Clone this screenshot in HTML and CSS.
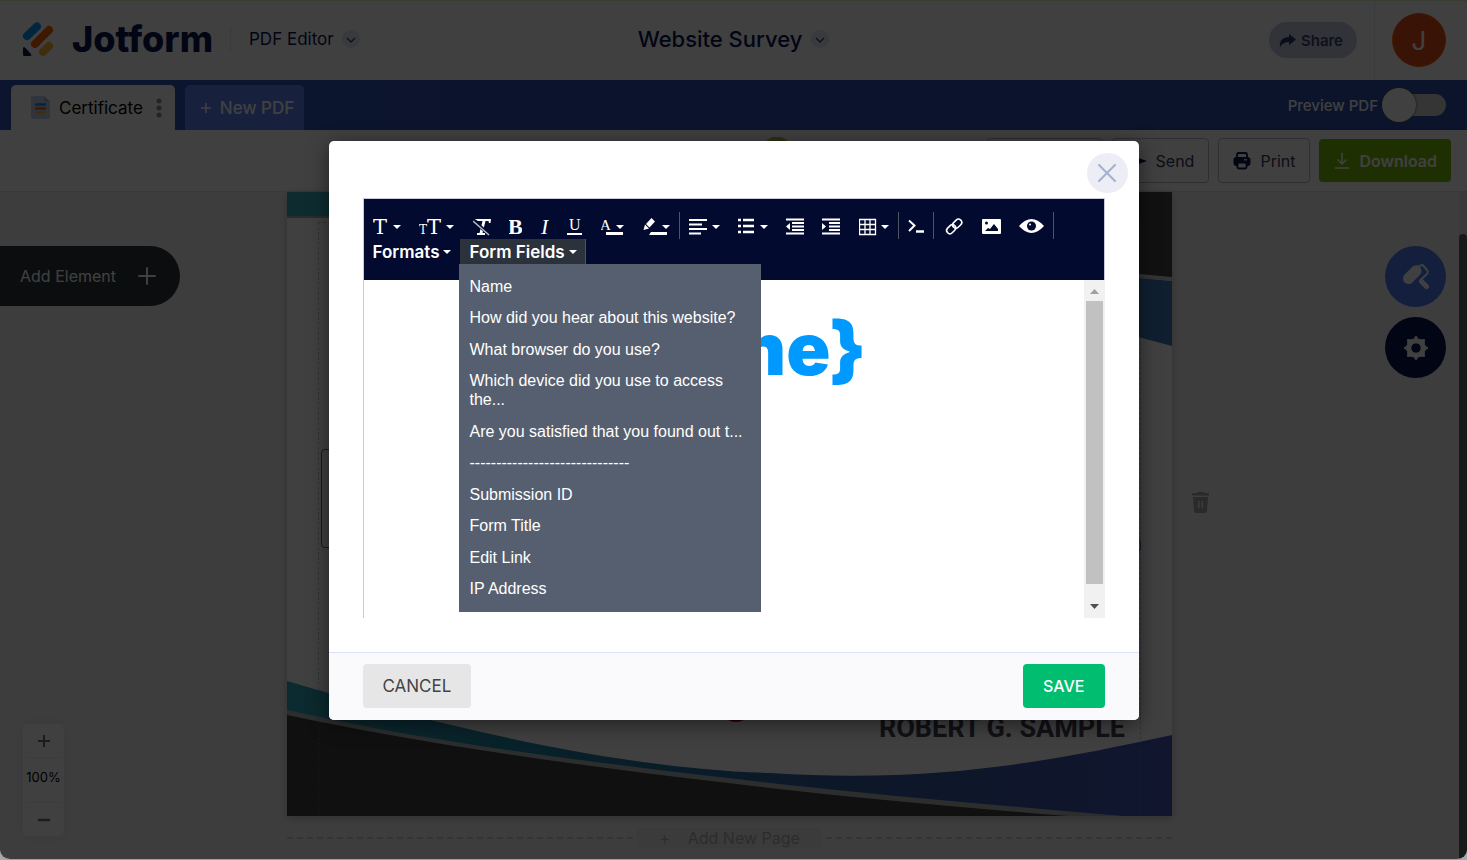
FILE: index.html
```html
<!DOCTYPE html>
<html lang="en">
<head>
  <meta charset="UTF-8" />
  <meta name="viewport" content="width=device-width, initial-scale=1.0"/>
  <title>Website Survey - PDF Editor</title>
  <link rel="stylesheet" href="styles.css">
</head>
<body>
<div class="app">
  <header class="header">
    <div class="header-left">
      <a href="#" class="logo">
        <svg width="32" height="36" viewBox="0 0 32 36">
          <g stroke-width="8" stroke-linecap="round">
            <path d="M5 15 L15 5.500" stroke="#0099ff"/>
            <path d="M13 23 L27 9" stroke="#ff6100"/>
            <path d="M21 31 L27 25" stroke="#ffb629"/>
          </g>
          <path d="M1 27.500 Q1 25 3 26.500 L9 33 Q10 35 8 35 H2.500 Q1 35 1 33.500 Z" fill="#0a1551"/>
        </svg>
        <span>Jotform</span>
      </a>
      <button class="product">PDF Editor
        <svg class="chev" width="18" height="18" viewBox="0 0 18 18"><circle cx="9" cy="9" r="9" fill="#e3e5f5"/><path d="M5 8 L9 12 L13 8" fill="none" stroke="#343c6a" stroke-width="1.300"/></svg>
      </button>
    </div>
    <button class="title">Website Survey
      <svg class="chev" width="18" height="18" viewBox="0 0 18 18"><circle cx="9" cy="9" r="9" fill="#e3e5f5"/><path d="M5 8 L9 12 L13 8" fill="none" stroke="#343c6a" stroke-width="1.300"/></svg>
    </button>
    <div class="header-right">
      <button class="share">
        <svg width="17" height="15" viewBox="0 0 17 15"><path d="M10 1 L17 6.500 L10 12 V9 C6 9 3 10.500 1 14 C0 8 4 4 10 4 Z" fill="#2c3460"/></svg>
        Share
      </button>
      <div class="account"><button class="avatar">J</button></div>
    </div>
  </header>

  <nav class="tabs">
    <button class="tab active">
      <svg width="19" height="23" viewBox="0 0 19 23"><path d="M2 0 H13 L19 6 V21 Q19 23 17 23 H2 Q0 23 0 21 V2 Q0 0 2 0 Z" fill="#c8ceed"/><path d="M13 0 L19 6 H15 Q13 6 13 4 Z" fill="#a5aed8"/><path d="M5 8.500 H14" stroke="#0099ff" stroke-width="2.500" stroke-linecap="round"/><path d="M5 12.500 H14" stroke="#ff6100" stroke-width="2.500" stroke-linecap="round"/><path d="M5 16.500 H14" stroke="#ffb629" stroke-width="2.500" stroke-linecap="round"/></svg>
      Certificate
      <svg class="dots" width="6" height="20" viewBox="0 0 6 20" fill="#8d8fa8"><circle cx="3" cy="3" r="2.500"/><circle cx="3" cy="10" r="2.500"/><circle cx="3" cy="17" r="2.500"/></svg>
    </button>
    <button class="tab new"><svg width="10" height="10" viewBox="0 0 10 10"><path d="M5 0 V10 M0 5 H10" stroke="#fff" stroke-width="1.500"/></svg>New PDF</button>
    <label class="preview">Preview PDF <input type="checkbox" /></label>
  </nav>

  <div class="actions">
    <span class="status"></span>
    <div class="action-buttons">
      <button class="action history" aria-label="History"></button>
      <button class="action">
        <svg width="20" height="16" viewBox="0 0 20 16"><path d="M0 1 L20 8 L0 15 L3 8 Z" fill="#0a1551"/></svg>
        Send
      </button>
      <button class="action">
        <svg width="18" height="18" viewBox="0 0 18 18"><path d="M4 5 V2.500 Q4 1 5.500 1 H12.500 Q14 1 14 2.500 V5" fill="none" stroke="#0a1551" stroke-width="1.800"/><rect x="0.500" y="5" width="17" height="9" rx="3" fill="#0a1551"/><rect x="4.500" y="10.500" width="9" height="6" rx="1.500" fill="#fff" stroke="#0a1551" stroke-width="1.800"/><path d="M11 7.800 H14" stroke="#fff" stroke-width="1.300"/></svg>
        Print
      </button>
      <button class="action download">
        <svg width="16" height="16" viewBox="0 0 16 16" fill="none" stroke="#fff" stroke-width="1.500"><path d="M8 0 V11 M3.500 6.500 L8 11 L12.500 6.500 M1 15 H15"/></svg>
        Download
      </button>
    </div>
  </div>

  <main class="workspace">
    <section class="paper">
      <svg class="art" viewBox="0 0 885 624" preserveAspectRatio="none">
        <defs>
          <linearGradient id="wave" x1="0" x2="1"><stop offset="0" stop-color="#30a8bc"/><stop offset="0.300" stop-color="#2080a4"/><stop offset="0.650" stop-color="#345ca0"/><stop offset="1" stop-color="#4458b8"/></linearGradient>
          <linearGradient id="corner" x1="0" x2="1"><stop offset="0" stop-color="#38b8cc"/><stop offset="1" stop-color="#4078c0"/></linearGradient>
        </defs>
        <rect width="400" height="24" fill="#38aebf"/>
        <rect width="400" height="2" y="24" fill="#a8b0b0"/>
        <path d="M400 0 H885 V86 Q640 70 400 0 Z" fill="#444"/>
        <path d="M400 10 Q640 68 885 89 V154 Q640 90 400 12 Z" fill="url(#corner)"/>
        <path d="M820 81 L885 87" stroke="#ccc" stroke-width="4"/>
        <path d="M0 489 C150 533 330 577 483 581 C650 592 770 568 885 543 V624 H0 Z" fill="url(#wave)"/>
        <path d="M0 518 C160 554 320 572 483 591 C600 604 720 614 836 624 H0 Z" fill="#b0b8b8"/>
        <path d="M0 523 C160 557 320 577 483 596 C580 607 680 616 781 624 H0 Z" fill="#404040"/>
        <ellipse cx="449" cy="526" rx="9" ry="4" fill="#a01028"/>
        <path d="M31.500 30 V624 M853.500 30 V624 M31 30.500 H853" stroke="#6080b0" stroke-opacity="0.400" stroke-dasharray="3 2" fill="none"/>
      </svg>
      <div class="selection"><span class="handle"></span></div>
      <p class="signer">ROBERT G. SAMPLE</p>
      <button class="trash" aria-label="Delete element">
        <svg width="17" height="21" viewBox="0 0 17 21"><path d="M0 2 Q0 1 1 1 H5 L6 0 H11 L12 1 H16 Q17 1 17 2 V3.500 H0 Z M1 5 H16 L15 19 Q15 21 13 21 H4 Q2 21 2 19 Z M6 9 V16 H7.500 V9 Z M9.500 9 V16 H11 V9 Z" fill="#a4a6ac" fill-rule="evenodd"/></svg>
      </button>
    </section>
    <div class="add-page">
      <button><span>+</span>Add New Page</button>
    </div>

    <button class="add-element">Add Element
      <svg width="18" height="18" viewBox="0 0 18 18"><path d="M9 1 V17 M1 9 H17" stroke="#fff" stroke-width="2" stroke-linecap="round"/></svg>
    </button>
    <div class="side-tools">
      <button class="designer" aria-label="Designer">
        <svg width="28" height="28" viewBox="0 0 28 28"><path d="M6.500 15.500 L14 8" stroke="#fff" stroke-width="11" stroke-linecap="round"/><path d="M10 4 Q12 2 15 2.500 L18 3 L19 9 L9 20 Q7 22 4 19 Z" fill="#fff"/><path d="M17 3.500 Q19.500 1 21.500 3 L25.500 7.500 Q26.500 9.500 25 11 L18.500 17 V19" fill="none" stroke="#fff" stroke-width="2"/><path d="M19.500 18.500 L24.500 23.500" stroke="#fff" stroke-width="5" stroke-linecap="round"/></svg>
      </button>
      <button class="settings" aria-label="Settings">
        <svg width="26" height="26" viewBox="0 0 26 26"><path fill="#fff" stroke="#fff" stroke-linejoin="round" fill-rule="evenodd" d="M13 1 Q14.500 4.500 16.500 4.500 Q18.500 5 21.500 4.500 Q21 7.500 21.500 9.500 Q22 11.500 25 13 Q22 14.500 21.500 16.500 Q21 18.500 21.500 21.500 Q18.500 21 16.500 21.500 Q14.500 21.500 13 25 Q11.500 21.500 9.500 21.500 Q7.500 21 4.500 21.500 Q5 18.500 4.500 16.500 Q4 14.500 1 13 Q4 11.500 4.500 9.500 Q5 7.500 4.500 4.500 Q7.500 5 9.500 4.500 Q11.500 4.500 13 1 Z M13 7.800 A5.200 5.200 0 1 0 13 18.200 A5.200 5.200 0 1 0 13 7.800 Z"/></svg>
      </button>
    </div>
    <div class="zoom">
      <button aria-label="Zoom in"><svg width="12" height="12" viewBox="0 0 12 12"><path d="M6 0 V12 M0 6 H12" stroke="#707070" stroke-width="2"/></svg></button>
      <span>100%</span>
      <button aria-label="Zoom out"><svg width="12" height="12" viewBox="0 0 12 12"><path d="M0 6 H12" stroke="#707070" stroke-width="2.500"/></svg></button>
    </div>
    <div class="page-scroll"><div></div></div>
  </main>

  <div class="overlay">
    <div class="modal" role="dialog" aria-label="Edit text">
      <button class="close" aria-label="Close"><svg width="18" height="18" viewBox="0 0 18 18"><path d="M1 1 L17 17 M17 1 L1 17" stroke="#a3b0cf" stroke-width="2" stroke-linecap="round"/></svg></button>
      <div class="modal-body">
        <div class="editor">
          <div class="toolbar">
            <div class="tool-row">
              <button aria-label="Font"><svg width="28" height="26" viewBox="0 0 28 26"><text x="0" y="21" class="slab" font-size="21">T</text><path class="caret" d="M20 12 H28 L24 16 Z"/></svg></button>
              <button aria-label="Font size"><svg width="36" height="26" viewBox="0 0 36 26"><text x="0" y="21" class="slab" font-size="12">T</text><text x="8" y="21" class="slab" font-size="21">T</text><path class="caret" d="M27 12 H35 L31 16 Z"/></svg></button>
              <button aria-label="Clear formatting"><svg width="18" height="26" viewBox="0 0 18 26"><path d="M1.500 6 H18 L17.500 10 H16 L15.500 8 H12.500 L9.500 20 H12 V22 H4 V20 H6.500 L9.500 8 H5 Z" fill="#fff"/><path d="M0 7 L17 22.500" stroke="#030a2f" stroke-width="3.500"/><path d="M0 8 L16 22" stroke="#b8bcc8" stroke-width="1.500"/></svg></button>
              <button aria-label="Bold"><svg width="13" height="26" viewBox="0 0 13 26"><text x="-1" y="21" class="serif" font-size="22" font-weight="700">B</text></svg></button>
              <button aria-label="Italic"><svg width="9" height="26" viewBox="0 0 9 26"><text x="1" y="21" class="serif" font-size="22" font-style="italic">I</text></svg></button>
              <button aria-label="Underline"><svg width="16" height="26" viewBox="0 0 16 26"><text x="2" y="17" class="serif" font-size="16">U</text><path d="M0 20 H15 V22 H0 Z" fill="#fff"/></svg></button>
              <button aria-label="Text color"><svg width="24" height="26" viewBox="0 0 24 26"><text x="-1" y="17" class="serif" font-size="15">A</text><path d="M5 19 H22 V22 H5 Z" fill="#fff"/><path class="caret" d="M15 12 H23 L19 16 Z"/></svg></button>
              <button aria-label="Highlight"><svg width="27" height="26" viewBox="0 0 27 26"><path d="M8.500 5 L12 8.500 L6.500 14.500 L3 11 Z M2 11.500 L6 15.500 L0.500 17 Z" fill="#fff"/><path d="M8 19 H24 V22 H6 Z" fill="#fff"/><path class="caret" d="M19 12 H27 L23 16 Z"/></svg></button>
              <span class="sep"></span>
              <button aria-label="Alignment"><svg width="31" height="26" viewBox="0 0 31 26"><path d="M0 7 H18 M0 11.500 H13 M0 16 H18 M0 20.500 H12" stroke="#fff" stroke-width="2"/><path class="caret" d="M23 12 H31 L27 16 Z"/></svg></button>
              <button aria-label="Bullet list"><svg width="30" height="26" viewBox="0 0 30 26"><path d="M0 7 H3 M5 7 H16 M0 13 H3 M5 13 H16 M0 19 H3 M5 19 H16" stroke="#fff" stroke-width="2.500"/><path class="caret" d="M22 12 H30 L26 16 Z"/></svg></button>
              <button aria-label="Outdent"><svg width="18" height="26" viewBox="0 0 18 26"><path d="M0 6.500 H18 M6 10 H18 M6 13.500 H18 M6 17 H18 M0 20.500 H18" stroke="#fff" stroke-width="1.800"/><path d="M4 10 V17 L0 13.500 Z" fill="#fff"/></svg></button>
              <button aria-label="Indent"><svg width="19" height="26" viewBox="0 0 19 26"><path d="M0 6.500 H18 M7 10 H18 M7 13.500 H18 M7 17 H18 M0 20.500 H18" stroke="#fff" stroke-width="1.800"/><path d="M0 10 V17 L4 13.500 Z" fill="#fff"/></svg></button>
              <button aria-label="Table"><svg width="30" height="26" viewBox="0 0 30 26"><path d="M0.500 6.500 H16.500 V21.500 H0.500 Z M6 6 V22 M11 6 V22 M0 11.500 H17 M0 16.500 H17" fill="none" stroke="#fff" stroke-width="1.300"/><path class="caret" d="M22 12 H30 L26 16 Z"/></svg></button>
              <span class="sep"></span>
              <button aria-label="Source code"><svg width="16" height="26" viewBox="0 0 16 26"><path d="M1 7.500 L6.500 12.500 L1 18" fill="none" stroke="#fff" stroke-width="2"/><path d="M8 18.500 H16" stroke="#fff" stroke-width="2.500"/></svg></button>
              <span class="sep"></span>
              <button aria-label="Link"><svg width="21" height="26" viewBox="0 0 21 26"><g fill="none" stroke="#fff" stroke-width="1.600"><rect x="-5" y="-3" width="10" height="6.500" rx="3.200" transform="translate(14 10.500) rotate(-45)"/><rect x="-5" y="-3" width="10" height="6.500" rx="3.200" transform="translate(8 16) rotate(-45)"/></g></svg></button>
              <button aria-label="Image"><svg width="19" height="26" viewBox="0 0 19 26"><rect y="6" width="19" height="15" rx="1" fill="#fff"/><circle cx="4.500" cy="10" r="1.500" fill="#030a2f"/><path d="M3 18 L6 15 L8 16 L12 11 L16 16 V18 Z" fill="#030a2f"/></svg></button>
              <button aria-label="Preview"><svg width="25" height="26" viewBox="0 0 25 26"><path d="M0 13 Q12.500 -1 25 13 Q12.500 27 0 13 Z" fill="#fff"/><circle cx="12.500" cy="13" r="4.500" fill="#030a2f"/><circle cx="11" cy="11.500" r="1" fill="#fff"/></svg></button>
              <span class="sep"></span>
            </div>
            <div class="menu-row">
              <button class="menu-button">Formats <svg width="8" height="4" viewBox="0 0 8 4"><path class="caret" d="M0 0 H8 L4 4 Z"/></svg></button>
              <div class="menu-holder">
                <button class="menu-button open">Form Fields <svg width="8" height="4" viewBox="0 0 8 4"><path class="caret" d="M0 0 H8 L4 4 Z"/></svg></button>
                <ul class="menu">
                  <li><button>Name</button></li>
                  <li><button>How did you hear about this website?</button></li>
                  <li><button>What browser do you use?</button></li>
                  <li><button>Which device did you use to access the...</button></li>
                  <li><button>Are you satisfied that you found out t...</button></li>
                  <li><button>------------------------------</button></li>
                  <li><button>Submission ID</button></li>
                  <li><button>Form Title</button></li>
                  <li><button>Edit Link</button></li>
                  <li><button>IP Address</button></li>
                </ul>
              </div>
            </div>
          </div>
          <div class="editor-content">
            <div class="text" contenteditable="true" role="textbox" aria-label="Text">{Name}</div>
            <div class="scrollbar">
              <svg width="21" height="21" viewBox="0 0 21 21"><path d="M6 14 L10.500 9 L15 14 Z" fill="#a0a0a0"/></svg>
              <div class="thumb"></div>
              <svg width="21" height="21" viewBox="0 0 21 21"><path d="M6 7 L10.500 12 L15 7 Z" fill="#505050"/></svg>
            </div>
          </div>
        </div>
      </div>
      <footer class="modal-footer">
        <button class="cancel">CANCEL</button>
        <button class="save">SAVE</button>
      </footer>
    </div>
  </div>
</div>
</body>
</html>
```
FILE: styles.css
```css
* {
  box-sizing: border-box;
}
body {
  margin: 0;
  background: #a8a8a8;
  font-family: Inter, "Liberation Sans", sans-serif;
  font-size: 16px;
  color: #0a1551;
}
button {
  font: inherit;
  color: inherit;
  background: none;
  border: none;
  padding: 0;
  cursor: pointer;
}
svg {
  display: block;
  flex: none;
}
.app {
  position: relative;
  display: flex;
  flex-direction: column;
  height: 100vh;
  min-height: 760px;
  border-bottom: 1px solid #a0a0a0;
  border-radius: 0 0 10px 10px;
  overflow: hidden;
}

/* header */
.header {
  display: grid;
  grid-template-columns: 1fr auto 1fr;
  height: 80px;
  background: #fff;
  box-shadow: inset 0 1px #d8f5c8;
}
.header-left, .header-right, .logo, .product, .title, .share {
  display: flex;
  align-items: center;
}
.header-left, .title {
  padding-bottom: 2px;
}
.logo {
  padding-left: 22px;
  gap: 18px;
  color: #0a1551;
  font-size: 36px;
  font-weight: 800;
  line-height: 40px;
  text-decoration: none;
}
.product {
  margin-left: 17px;
  padding-left: 18px;
  height: 24px;
  gap: 8px;
  border-left: 1px solid #e3e5f5;
  font-size: 17px;
}
.title {
  gap: 9px;
  font-size: 22px;
  font-weight: 500;
}
.header-right {
  justify-content: flex-end;
}
.share {
  height: 36px;
  padding: 0 14px 0 10px;
  gap: 5px;
  border-radius: 18px;
  background: #c4c9e4;
  color: #3c4470;
  font-size: 15px;
  font-weight: 600;
}
.account {
  display: flex;
  align-items: center;
  height: 100%;
  margin-left: 17px;
  padding: 0 21px 0 17px;
  border-left: 1px solid #e3e5f5;
}
.avatar {
  width: 54px;
  height: 54px;
  border: 1px solid #ff6100;
  border-radius: 50%;
  background: #e84d1c;
  color: #fff;
  font-size: 26px;
}

/* pdf tabs */
.tabs {
  display: flex;
  align-items: flex-end;
  height: 50px;
  padding: 0 21px 0 11px;
  background: linear-gradient(90deg, #3454b8, #3050b0);
}
.tab {
  display: flex;
  align-items: center;
  height: 45px;
  border-radius: 5px 5px 0 0;
  font-size: 17px;
}
.tab.active {
  padding: 0 13px 0 20px;
  gap: 9px;
  background: #fff;
  color: #000;
}
.dots {
  margin-left: 4px;
}
.tab.new {
  margin-left: 10px;
  padding: 0 10px 0 16px;
  gap: 9px;
  background: #5c84f4;
  color: #fff;
  font-weight: 500;
}
.preview {
  display: flex;
  align-items: center;
  align-self: center;
  gap: 4px;
  margin-left: auto;
  color: #fff;
  font-size: 15px;
  font-weight: 500;
}
.preview input {
  appearance: none;
  width: 64px;
  height: 22px;
  margin: 0;
  border-radius: 11px;
  background: #d2d2d2;
  display: flex;
  align-items: center;
}
.preview input::before {
  content: "";
  width: 34px;
  height: 34px;
  flex: none;
  border-radius: 50%;
  background: #fff;
  box-shadow: 0 0 3px #555;
}

/* action bar */
.actions {
  display: grid;
  grid-template-columns: 1fr auto 1fr;
  align-items: center;
  height: 62px;
  padding: 0 16px;
  background: #fff;
  border-bottom: 1px solid #e3e3ea;
}
.status {
  grid-column: 2;
  width: 116px;
  height: 47px;
  background: radial-gradient(circle at 101px 14px, #a0c850 14px, transparent 15px);
}
.action-buttons {
  display: flex;
  justify-content: flex-end;
  align-items: center;
  gap: 9px;
}
.action {
  display: flex;
  align-items: center;
  gap: 9px;
  height: 45px;
  padding: 0 14px;
  border: 1px solid #b8bac8;
  border-radius: 4px;
  color: #343a5c;
}
.action.history {
  width: 116px;
}
.action.download {
  height: 43px;
  padding: 0 14px 0 15px;
  border: none;
  background: #78bb07;
  color: #fff;
  font-weight: 600;
}

/* workspace */
.workspace {
  position: relative;
  flex: 1;
  padding: 0 8px 0 0;
  background: #f3f3f8;
}
.paper {
  position: relative;
  width: 885px;
  max-width: 100%;
  height: 624px;
  margin: 0 auto;
  background: #fff;
  box-shadow: 0 2px 8px #bbb;
}
.art {
  width: 100%;
  height: 100%;
}
.selection {
  position: absolute;
  top: 257px;
  left: 34px;
  right: 34px;
  height: 99px;
  border: 1px solid #4464c0;
  border-radius: 4px;
}
.handle {
  position: absolute;
  right: 4px;
  right: -4px;
  bottom: -4px;
  width: 10px;
  height: 11px;
  border: 1px solid #4464c0;
  border-radius: 2px;
}
.signer {
  position: absolute;
  right: 47px;
  bottom: 72px;
  margin: 0;
  color: #44465a;
  font-family: Roboto, sans-serif;
  font-size: 27px;
  font-weight: 700;
  line-height: 32px;
}
.trash {
  position: absolute;
  top: 300px;
  left: calc(100% + 20px);
}
.add-page {
  display: flex;
  align-items: center;
  gap: 4px;
  width: 885px;
  max-width: 100%;
  margin: 12px auto 0;
}
.add-page::before, .add-page::after {
  content: "";
  flex: 1;
  height: 2px;
  background: repeating-linear-gradient(90deg, #d0d0d4 0 6px, transparent 6px 10px);
}
.add-page button {
  height: 20px;
  padding: 0 22px;
  border-radius: 4px;
  background: #ebebeb;
  color: #b0b0b4;
  line-height: 18px;
}
.add-page span {
  margin-right: 18px;
}
.add-element {
  position: absolute;
  top: 54px;
  left: 0;
  display: flex;
  align-items: center;
  gap: 22px;
  height: 60px;
  padding: 0 24px 0 20px;
  border-radius: 0 30px 30px 0;
  background: #2c343a;
  color: #fff;
}
.side-tools {
  position: absolute;
  top: 54px;
  right: 21px;
  display: flex;
  flex-direction: column;
  gap: 10px;
}
.side-tools button {
  display: flex;
  align-items: center;
  justify-content: center;
  width: 61px;
  height: 61px;
  border-radius: 50%;
}
.designer {
  background: #4c7cf4;
}
.settings {
  background: #0a1551;
}
.zoom {
  position: absolute;
  left: 23px;
  bottom: 23px;
  display: flex;
  flex-direction: column;
  align-items: center;
  width: 41px;
  border-radius: 5px;
  background: #fff;
  box-shadow: 0 0 14px #e4e4ea;
  color: #000;
  font-size: 13px;
}
.zoom button {
  display: flex;
  align-items: center;
  justify-content: center;
  width: 36px;
  height: 33px;
}
.zoom span {
  width: 36px;
  height: 46px;
  line-height: 38px;
  border: 1px solid #eee;
  border-width: 1px 0;
  display: flex;
  justify-content: center;
}
.page-scroll {
  position: absolute;
  top: 0;
  right: 0;
  bottom: 0;
  width: 8px;
  padding-top: 42px;
  border-radius: 4px;
  background: #e4e4e8;
}
.page-scroll div {
  height: 100%;
  border-radius: 4px 4px 0 0;
  background: #5c646c;
}

/* modal */
.overlay {
  position: absolute;
  inset: 0;
  display: flex;
  align-items: center;
  justify-content: center;
  padding-top: 2px;
  background: rgba(0, 0, 0, 0.75);
}
.modal {
  position: relative;
  width: 810px;
  max-width: 94%;
  border-radius: 5px;
  background: #fff;
  box-shadow: 0 4px 20px rgba(0, 0, 0, 0.5);
}
.close {
  position: absolute;
  top: 12px;
  right: 11px;
  display: flex;
  align-items: center;
  justify-content: center;
  width: 41px;
  height: 40px;
  border-radius: 50%;
  background: #ededf6;
}
.modal-body {
  padding: 57px 34px 34px;
}
.editor {
  border: 1px solid #c8cbe0;
  border-width: 1px 1px 0 1px;
}
.toolbar {
  padding: 13px 0 16px;
  background: #030a2f;
  color: #fff;
}
.tool-row {
  display: flex;
  height: 27px;
}
.tool-row button {
  padding: 0 9px;
}
.sep {
  width: 1px;
  background: #4d5562;
}
.slab, .serif, .caret {
  fill: #fff;
}
.slab {
  font-family: "DejaVu Serif", serif;
}
.serif {
  font-family: "Liberation Serif", serif;
}
.menu-row {
  display: flex;
}
.menu-holder {
  position: relative;
}
.menu-button {
  display: flex;
  align-items: center;
  gap: 4px;
  height: 25px;
  padding: 0 9px;
  font-size: 17px;
  font-weight: 600;
}
.menu-button.open {
  padding-right: 8px;
  background: #2c323c;
  border-right: 1px solid #4d5562;
}
.menu {
  position: absolute;
  top: 25px;
  left: -1px;
  z-index: 2;
  display: flex;
  flex-direction: column;
  justify-content: space-between;
  width: 302px;
  min-height: 348px;
  margin: 0;
  padding: 7px 0 8px;
  background: #565f70;
  list-style: none;
}
.menu button {
  display: block;
  width: 100%;
  padding: 6px 10px;
  font-family: "Liberation Sans", Arial, sans-serif;
  font-size: 16px;
  line-height: 19px;
  text-align: left;
}
.editor-content {
  display: flex;
  height: 338px;
  margin-right: -1px;
}
.text {
  flex: 1;
  padding-top: 27px;
  color: #0099ff;
  font-size: 73px;
  font-weight: 900;
  line-height: 84px;
  text-align: center;
}
.scrollbar {
  display: flex;
  flex-direction: column;
  width: 21px;
  background: #f1f1f1;
}
.thumb {
  flex: 1;
  margin: 0 2px 13px;
  background: #c1c1c1;
}
.modal-footer {
  display: flex;
  justify-content: space-between;
  padding: 11px 34px 12px;
  border-top: 1px solid #dbe1f3;
  border-radius: 0 0 5px 5px;
  background: #fafafc;
}
.cancel, .save {
  height: 44px;
  padding: 0 20px;
  border-radius: 4px;
}
.cancel {
  background: #e6e6e6;
  color: #444;
  font-size: 17px;
}
.save {
  background: #01bd6f;
  color: #fff;
  font-weight: 500;
}
```
